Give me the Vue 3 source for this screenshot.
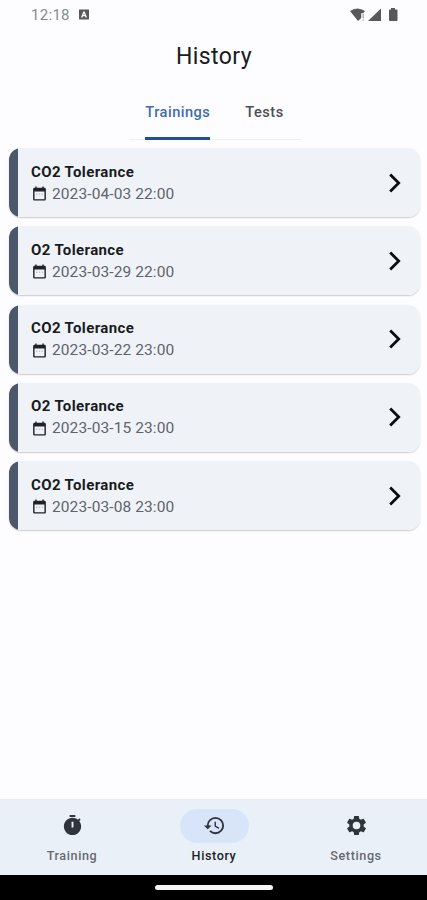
<script setup>
import { ref } from 'vue'

const tabs = ['Trainings', 'Tests']
const activeTab = ref('Trainings')
const activePage = ref('History')
const sessions = [
  { name: 'CO2 Tolerance', date: '2023-04-03 22:00' },
  { name: 'O2 Tolerance', date: '2023-03-29 22:00' },
  { name: 'CO2 Tolerance', date: '2023-03-22 23:00' },
  { name: 'O2 Tolerance', date: '2023-03-15 23:00' },
  { name: 'CO2 Tolerance', date: '2023-03-08 23:00' },
]
const pages = [
  {
    name: 'Training',
    icon: 'M9 1h6v2H9zM19.03 7.39l1.42-1.42c-.43-.51-.9-.99-1.41-1.41l-1.42 1.42C16.07 4.74 14.12 4 12 4c-4.97 0-9 4.03-9 9s4.02 9 9 9 9-4.03 9-9c0-2.12-.74-4.07-1.97-5.61zM13 14h-2V8h2v6z',
  },
  {
    name: 'History',
    icon: 'M13 3a9 9 0 0 0-9 9H1l3.89 3.89.07.14L9 12H6c0-3.87 3.13-7 7-7s7 3.13 7 7-3.13 7-7 7c-1.93 0-3.68-.79-4.94-2.06l-1.42 1.42A8.954 8.954 0 0 0 13 21a9 9 0 0 0 0-18zm-1 5v5l4.28 2.54.72-1.21-3.5-2.08V8H12z',
  },
  {
    name: 'Settings',
    icon: 'M19.43 12.98c.04-.32.07-.64.07-.98s-.03-.66-.07-.98l2.11-1.65c.19-.15.24-.42.12-.64l-2-3.46c-.12-.22-.39-.3-.61-.22l-2.49 1c-.52-.4-1.08-.73-1.69-.98l-.38-2.65A.488.488 0 0 0 14 2h-4c-.25 0-.46.18-.49.42l-.38 2.65c-.61.25-1.17.59-1.69.98l-2.49-1c-.23-.09-.49 0-.61.22l-2 3.46c-.13.22-.07.49.12.64l2.11 1.65c-.04.32-.07.65-.07.98s.03.66.07.98l-2.11 1.65c-.19.15-.24.42-.12.64l2 3.46c.12.22.39.3.61.22l2.49-1c.52.4 1.08.73 1.69.98l.38 2.65c.03.24.24.42.49.42h4c.25 0 .46-.18.49-.42l.38-2.65c.61-.25 1.17-.59 1.69-.98l2.49 1c.23.09.49 0 .61-.22l2-3.46c.12-.22.07-.49-.12-.64l-2.11-1.65zM12 16a4 4 0 1 1 0-8 4 4 0 0 1 0 8z',
  },
]
</script>

<template>
  <div class="screen">
    <div class="status">
      <span class="clock">12:18</span>
      <svg class="app-badge" viewBox="0 0 10 10">
        <path fill-rule="evenodd" d="M.5 0h9a.5.5 0 0 1 .5.5v9a.5.5 0 0 1-.5.5h-9a.5.5 0 0 1-.5-.5v-9A.5.5 0 0 1 .5 0zM4.3 2 2 8h1.500l.4-1.200h2.200L6.500 8H8L5.700 2zM5 3.800l.6 1.800H4.400z" />
      </svg>
      <svg class="signals" viewBox="0 0 50 16">
        <path d="M0 4Q7.500-1 15 4L13.200 6.200H11.200V11L8 14z" />
        <path d="M12.500 7h1.300v4.500h-1.300zM12.500 12.500h1.300v1.300h-1.300z" opacity=".5" />
        <path d="M31 1.500V14H18z" />
        <path d="M41 1h4v1.500h1.500q1 0 1 1V13q0 1-1 1h-6.500q-1 0-1-1V3.500q0-1 1-1H41z" />
      </svg>
    </div>
    <h1>History</h1>
    <div class="tabs">
      <button v-for="tab in tabs" :key="tab" :class="{ active: tab === activeTab }" @click="activeTab = tab">{{ tab }}</button>
    </div>
    <main>
      <article v-for="session in sessions" :key="session.date">
        <div class="info">
          <h2>{{ session.name }}</h2>
          <div class="date">
            <svg viewBox="0 0 24 24"><path d="M19 4h-1V2h-2v2H8V2H6v2H5c-1.100 0-2 .9-2 2v14c0 1.100.9 2 2 2h14c1.100 0 2-.9 2-2V6c0-1.100-.9-2-2-2zm0 16H5V9h14v11z" /><path d="M7 12h2v2H7zm4 0h2v2h-2zm4 0h2v2h-2z" opacity=".2" /></svg>
            <span>{{ session.date }}</span>
          </div>
        </div>
        <svg class="chevron" viewBox="0 0 12 20"><path d="m1.200 1.500 8.500 8.500-8.500 8.500" /></svg>
      </article>
    </main>
    <nav>
      <button v-for="page in pages" :key="page.name" :class="{ active: page.name === activePage }" @click="activePage = page.name">
        <span class="pill"><svg viewBox="0 0 24 24"><path :d="page.icon" /></svg></span>
        <span class="label">{{ page.name }}</span>
      </button>
    </nav>
    <footer><span></span></footer>
  </div>
</template>

<style>
body {
  background: #fdfdff;
}
</style>

<style scoped>
* {
  box-sizing: border-box;
}
.screen {
  height: 900px;
  display: flex;
  flex-direction: column;
  background: #fdfdff;
  color: #191b20;
  font-family: Roboto, sans-serif;
}
button {
  border: 0;
  background: none;
  padding: 0;
  font-family: inherit;
}
svg {
  display: block;
  fill: currentColor;
}
.status {
  display: flex;
  align-items: center;
  height: 29px;
  padding: 0 29px 0 31px;
  color: #57585a;
}
.clock {
  width: 39px;
  font-size: 15px;
  letter-spacing: 0.3px;
  color: #88898c;
}
.app-badge {
  width: 10px;
  height: 11px;
  margin-left: 9px;
}
.signals {
  width: 50px;
  height: 16px;
  margin: 0 -2px 0 auto;
}
h1 {
  margin: 0;
  height: 53px;
  line-height: 55px;
  text-align: center;
  font-size: 23px;
  font-weight: 400;
  letter-spacing: 0.4px;
  padding-left: 1px;
}
.tabs {
  align-self: center;
  display: flex;
  justify-content: center;
  gap: 35px;
  width: 172px;
  height: 58px;
  margin-left: 3px;
  padding-right: 1px;
  border-bottom: 1px solid #efeff2;
}
.tabs button {
  height: 58px;
  padding-top: 5px;
  border-bottom: 3px solid transparent;
  color: #4c4e54;
  font-size: 14.600px;
  font-weight: 500;
  letter-spacing: 0.480px;
}
.tabs .active {
  color: #3f6dad;
  border-color: #204f98;
  border-radius: 2px 2px 0 0;
}
main {
  flex: 1;
  display: flex;
  flex-direction: column;
  gap: 9.200px;
  padding: 8.300px 7.500px 0 9px;
}
article {
  display: flex;
  align-items: center;
  height: 69px;
  padding: 0 18.500px 0 22px;
  border-radius: 12px;
  background: linear-gradient(to right, #4d576a 9px, #eff3f8 9px);
  box-shadow: 0 1px 1.500px #00000033;
}
.info {
  flex: 1;
}
h2 {
  margin: 0;
  font-size: 15px;
  line-height: 22px;
  font-weight: 700;
  letter-spacing: 0.380px;
}
.date {
  display: flex;
  align-items: center;
  gap: 4px;
  height: 22px;
  color: #606369;
}
.date span {
  font-size: 15.500px;
  line-height: 20px;
  letter-spacing: 0.100px;
}
.date svg {
  width: 17px;
  height: 17px;
  color: #202228;
}
.chevron {
  width: 12px;
  height: 20px;
  fill: none;
  stroke: #0b0d12;
  stroke-width: 2.800;
}
nav {
  display: flex;
  height: 76px;
  padding-left: 1px;
  background: #eaf0f8;
  border-top: 1px solid #e8ebf1;
}
nav button {
  flex: 1;
  display: flex;
  flex-direction: column;
  align-items: center;
  padding-top: 9px;
  color: #30343c;
}
.pill {
  display: grid;
  place-items: center;
  width: 69px;
  height: 34px;
  padding-bottom: 1px;
  border-radius: 17px;
}
.pill svg {
  width: 23px;
  height: 23px;
}
.active .pill {
  background: #d8e4f8;
}
.label {
  margin-top: 5px;
  font-size: 12.600px;
  line-height: 16px;
  font-weight: 500;
  letter-spacing: 0.600px;
  color: #666970;
}
.active .label {
  color: #202329;
}
footer {
  height: 25px;
  padding-top: 10px;
  background: #000;
}
footer span {
  display: block;
  width: 118px;
  height: 5px;
  margin: 0 auto;
  border-radius: 3px;
  background: #f5f5f5;
}
</style>
